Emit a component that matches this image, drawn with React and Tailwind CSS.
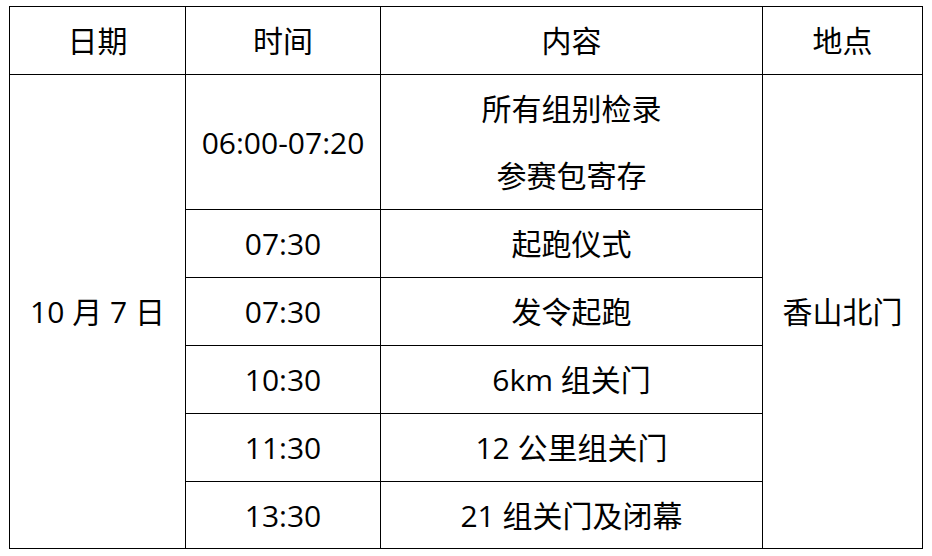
const rows = [
  { time: '07:30', content: '起跑仪式' },
  { time: '07:30', content: '发令起跑' },
  { time: '10:30', content: '6km 组关门' },
  { time: '11:30', content: '12 公里组关门' },
  { time: '13:30', content: '21 组关门及闭幕', last: true },
];

export default function App() {
  return (
    <div
      className="w-[932px] h-[556px] bg-white pl-[9px] pt-[6px] text-black"
      style={{ fontFamily: '"Open Sans", "Noto Sans CJK SC", sans-serif' }}
    >
      <table className="table-fixed border-collapse w-[913px] text-[30px] text-center">
        <colgroup>
          <col className="w-[176px]" />
          <col className="w-[195px]" />
          <col className="w-[382px]" />
          <col className="w-[160px]" />
        </colgroup>
        <tbody>
          <tr className="h-[68px]">
            <td className="border border-black p-0">日期</td>
            <td className="border border-black p-0">时间</td>
            <td className="border border-black p-0">内容</td>
            <td className="border border-black p-0">地点</td>
          </tr>
          <tr className="h-[134px]">
            <td rowSpan={6} className="border border-black p-0">10 月 7 日</td>
            <td className="border border-black p-0">06:00-07:20</td>
            <td className="border border-black p-0 leading-[67px]">
              <div>所有组别检录</div>
              <div>参赛包寄存</div>
            </td>
            <td rowSpan={6} className="border border-black p-0">香山北门</td>
          </tr>
          {rows.map((r, i) => (
            <tr key={i} className={r.last ? 'h-[67px]' : 'h-[68px]'}>
              <td className="border border-black p-0">{r.time}</td>
              <td className="border border-black p-0">{r.content}</td>
            </tr>
          ))}
        </tbody>
      </table>
    </div>
  );
}
